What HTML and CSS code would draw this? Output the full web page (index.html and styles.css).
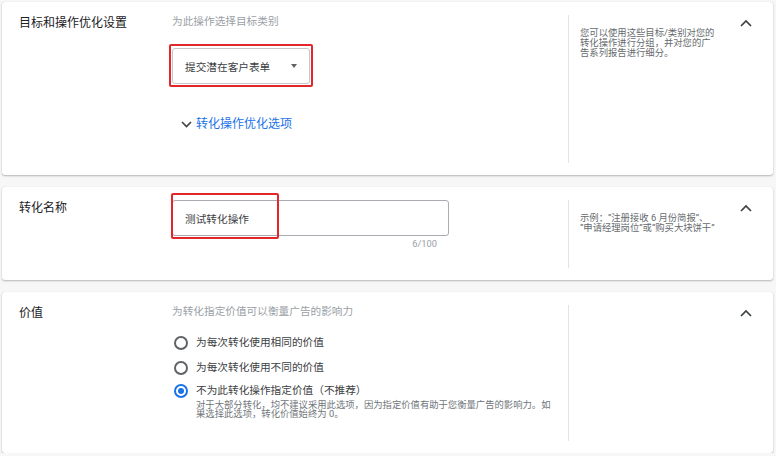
FILE: index.html
```html
<!DOCTYPE html>
<html lang="zh-CN">
<head>
<meta charset="utf-8">
<title>转化操作设置</title>
<link rel="stylesheet" href="styles.css">
</head>
<body>
<div class="page">
  <section class="card card-goal">
    <div class="label">目标和操作优化设置</div>
    <div class="main">
      <div class="sub">为此操作选择目标类别</div>
      <div class="select-wrap">
        <div class="select">
          <span class="select-text">提交潜在客户表单</span>
          <span class="caret"></span>
        </div>
        <div class="mark mark-select"></div>
      </div>
      <div class="expander">
        <svg class="chev-down" width="11" height="7" viewBox="0 0 11 7"><path d="M1 1 L5.5 5.5 L10 1" fill="none" stroke="#3c4043" stroke-width="1.6"/></svg>
        <span>转化操作优化选项</span>
      </div>
    </div>
    <div class="help"><p class="help-text">您可以使用这些目标/类别对您的转化操作进行分组，并对您的广告系列报告进行细分。</p></div>
    <div class="toggle"><svg width="12" height="8" viewBox="0 0 12 8"><path d="M1 7 L6 2 L11 7" fill="none" stroke="#3c4043" stroke-width="1.7"/></svg></div>
  </section>

  <section class="card card-name">
    <div class="label">转化名称</div>
    <div class="main">
      <div class="input-wrap">
        <div class="input">测试转化操作</div>
        <div class="counter">6/100</div>
        <div class="mark mark-input"></div>
      </div>
    </div>
    <div class="help"><p class="help-text">示例：“注册接收 6 月份简报”、<br>“申请经理岗位”或“购买大块饼干”</p></div>
    <div class="toggle"><svg width="12" height="8" viewBox="0 0 12 8"><path d="M1 7 L6 2 L11 7" fill="none" stroke="#3c4043" stroke-width="1.7"/></svg></div>
  </section>

  <section class="card card-value">
    <div class="label">价值</div>
    <div class="main">
      <div class="sub">为转化指定价值可以衡量广告的影响力</div>
      <div class="radio r1"><span class="circle"></span><span class="radio-label">为每次转化使用相同的价值</span></div>
      <div class="radio r2"><span class="circle"></span><span class="radio-label">为每次转化使用不同的价值</span></div>
      <div class="radio r3"><span class="circle checked"></span>
        <div class="radio-body">
          <span class="radio-label">不为此转化操作指定价值（不推荐）</span>
          <p class="desc">对于大部分转化，均不建议采用此选项，因为指定价值有助于您衡量广告的影响力。如果选择此选项，转化价值始终为 0。</p>
        </div>
      </div>
    </div>
    <div class="help"></div>
    <div class="toggle"><svg width="12" height="8" viewBox="0 0 12 8"><path d="M1 7 L6 2 L11 7" fill="none" stroke="#3c4043" stroke-width="1.7"/></svg></div>
  </section>
</div>
</body>
</html>
```

FILE: styles.css
```css
* { box-sizing: border-box; }
html, body { margin: 0; padding: 0; }
body {
  background: #f7f7f7;
  font-family: Roboto, "Noto Sans CJK SC", sans-serif;
  color: #202124;
}
.page {
  padding: 2px 3px 0 2px;
  display: flex;
  flex-direction: column;
  gap: 12px;
}
.card {
  background: #fff;
  border-radius: 3px;
  box-shadow: 0 1px 2px rgba(60, 64, 67, 0.35), 0 0 1px rgba(60, 64, 67, 0.15);
  display: flex;
  padding: 13px 13px 12px 0;
}
.card-goal { min-height: 173px; }
.card-name { min-height: 93px; }
.card-value { min-height: 161px; }
.label {
  width: 170px;
  flex: none;
  padding-left: 17px;
  font-size: 12px;
  line-height: 16px;
  color: #202124;
}
.main {
  width: 396px;
  flex: none;
}
.sub {
  font-size: 10.67px;
  line-height: 14px;
  color: #9aa0a6;
}
.select-wrap {
  position: relative;
  margin-top: 19px;
  width: 138px;
}
.select {
  height: 36px;
  border: 1px solid #c4c7c9;
  border-radius: 3px;
  display: flex;
  align-items: center;
  justify-content: space-between;
  padding: 0 12px 0 12px;
}
.select-text {
  font-size: 10.67px;
  color: #3c4043;
}
.caret {
  width: 0;
  height: 0;
  border-left: 3.5px solid transparent;
  border-right: 3.5px solid transparent;
  border-top: 4px solid #5f6368;
}
.mark {
  position: absolute;
  border: 2px solid #e3262b;
  border-radius: 2px;
}
.mark-select {
  left: -3px;
  top: -4px;
  width: 144px;
  height: 43px;
}
.expander {
  margin-top: 32px;
  padding-left: 9px;
  display: flex;
  align-items: center;
  gap: 4px;
  font-size: 12px;
  line-height: 16px;
  color: #1a73e8;
}
.chev-down { display: block; }
.help {
  flex: 1;
  border-left: 1px solid #e3e3e3;
  padding: 13px 0 0 11px;
}
.help-text {
  margin: 0;
  max-width: 138px;
  font-size: 9.33px;
  line-height: 9.8px;
  color: #666a6e;
}
.toggle {
  width: 28px;
  flex: none;
  display: flex;
  justify-content: center;
  padding-top: 4px;
}
.toggle svg { display: block; }
.input-wrap {
  position: relative;
  width: 277px;
}
.input {
  height: 36px;
  border: 1px solid #a9acb0;
  border-radius: 3px;
  padding-left: 12px;
  display: flex;
  align-items: center;
  font-size: 10.67px;
  color: #3c4043;
}
.counter {
  margin-top: 2px;
  text-align: right;
  padding-right: 12px;
  font-size: 9.33px;
  line-height: 12px;
  color: #9aa0a6;
}
.mark-input {
  left: -1px;
  top: -7px;
  width: 108px;
  height: 46px;
}
.radio {
  display: flex;
  align-items: flex-start;
  gap: 8px;
  padding-left: 2px;
}
.r1 { margin-top: 17px; }
.r2 { margin-top: 11px; }
.r3 { margin-top: 9px; }
.circle {
  flex: none;
  width: 14px;
  height: 14px;
  border: 2px solid #5f6368;
  border-radius: 50%;
  display: flex;
  align-items: center;
  justify-content: center;
}
.circle.checked { border-color: #1a73e8; }
.circle.checked::after {
  content: "";
  width: 6px;
  height: 6px;
  border-radius: 50%;
  background: #1a73e8;
}
.radio-label {
  display: block;
  font-size: 10.67px;
  line-height: 14px;
  color: #3c4043;
}
.desc {
  margin: 2px 0 0 0;
  max-width: 359px;
  font-size: 9.33px;
  line-height: 9.4px;
  color: #70757a;
}
```
